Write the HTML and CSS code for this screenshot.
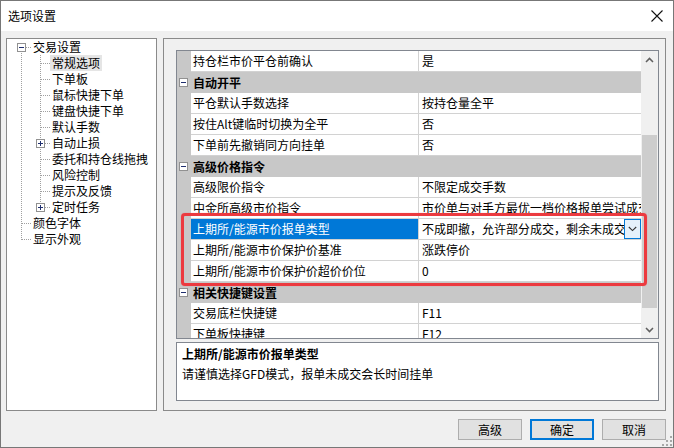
FILE: index.html
```html
<!DOCTYPE html>
<html lang="zh-CN">
<head>
<meta charset="utf-8">
<title>选项设置</title>
<link rel="stylesheet" href="styles.css">
</head>
<body>
<div class="window">
  <div class="titlebar">
    <span class="title">选项设置</span>
    <svg class="close" width="12" height="12" viewBox="0 0 12 12"><path d="M0.5 0.5L11.5 11.5M11.5 0.5L0.5 11.5" stroke="#111" stroke-width="1.1" fill="none"/></svg>
  </div>

  <div class="content">
    <div class="tree">
      <div class="trow">
        <div class="ca ca-first"><svg class="box" width="9" height="9" viewBox="0 0 9 9"><rect x="0.5" y="0.5" width="8" height="8" fill="#fff" stroke="#919191"/><path d="M2 4.5H7" stroke="#1f2f6f"/></svg></div>
        <span class="tlabel">交易设置</span>
      </div>
      <div class="trow"><div class="ca ca-pass"></div><div class="cb cb-mid"></div><span class="tlabel sel">常规选项</span></div>
      <div class="trow"><div class="ca ca-pass"></div><div class="cb cb-mid"></div><span class="tlabel">下单板</span></div>
      <div class="trow"><div class="ca ca-pass"></div><div class="cb cb-mid"></div><span class="tlabel">鼠标快捷下单</span></div>
      <div class="trow"><div class="ca ca-pass"></div><div class="cb cb-mid"></div><span class="tlabel">键盘快捷下单</span></div>
      <div class="trow"><div class="ca ca-pass"></div><div class="cb cb-mid"></div><span class="tlabel">默认手数</span></div>
      <div class="trow"><div class="ca ca-pass"></div><div class="cb cb-mid"><svg class="box" width="9" height="9" viewBox="0 0 9 9"><rect x="0.5" y="0.5" width="8" height="8" fill="#fff" stroke="#919191"/><path d="M2 4.5H7M4.5 2V7" stroke="#1f2f6f"/></svg></div><span class="tlabel">自动止损</span></div>
      <div class="trow"><div class="ca ca-pass"></div><div class="cb cb-mid"></div><span class="tlabel">委托和持仓线拖拽</span></div>
      <div class="trow"><div class="ca ca-pass"></div><div class="cb cb-mid"></div><span class="tlabel">风险控制</span></div>
      <div class="trow"><div class="ca ca-pass"></div><div class="cb cb-mid"></div><span class="tlabel">提示及反馈</span></div>
      <div class="trow"><div class="ca ca-pass"></div><div class="cb cb-last"><svg class="box" width="9" height="9" viewBox="0 0 9 9"><rect x="0.5" y="0.5" width="8" height="8" fill="#fff" stroke="#919191"/><path d="M2 4.5H7M4.5 2V7" stroke="#1f2f6f"/></svg></div><span class="tlabel">定时任务</span></div>
      <div class="trow"><div class="ca ca-mid"></div><span class="tlabel">颜色字体</span></div>
      <div class="trow"><div class="ca ca-last"></div><span class="tlabel">显示外观</span></div>
    </div>

    <div class="panel">
      <div class="grid">
        <div class="rows">
          <div class="row"><div class="gut"></div><div class="name">持仓栏市价平仓前确认</div><div class="val">是</div></div>
          <div class="row cat"><div class="gut"><svg class="box" width="9" height="9" viewBox="0 0 9 9"><rect x="0.5" y="0.5" width="8" height="8" fill="#fff" stroke="#919191"/><path d="M2 4.5H7" stroke="#1f2f6f"/></svg></div><div class="catname">自动开平</div></div>
          <div class="row"><div class="gut"></div><div class="name">平仓默认手数选择</div><div class="val">按持仓量全平</div></div>
          <div class="row"><div class="gut"></div><div class="name">按住Alt键临时切换为全平</div><div class="val">否</div></div>
          <div class="row"><div class="gut"></div><div class="name">下单前先撤销同方向挂单</div><div class="val">否</div></div>
          <div class="row cat"><div class="gut"><svg class="box" width="9" height="9" viewBox="0 0 9 9"><rect x="0.5" y="0.5" width="8" height="8" fill="#fff" stroke="#919191"/><path d="M2 4.5H7" stroke="#1f2f6f"/></svg></div><div class="catname">高级价格指令</div></div>
          <div class="row"><div class="gut"></div><div class="name">高级限价指令</div><div class="val">不限定成交手数</div></div>
          <div class="row"><div class="gut"></div><div class="name">中金所高级市价指令</div><div class="val">市价单与对手方最优一档价格报单尝试成交</div></div>
          <div class="row"><div class="gut"></div><div class="name selected">上期所/能源市价报单类型</div><div class="val editing"><span class="vtext">不成即撤，允许部分成交，剩余未成交</span><span class="dropbtn"><svg width="9" height="6" viewBox="0 0 9 6"><path d="M0.8 1L4.5 4.6L8.2 1" stroke="#333" stroke-width="1.1" fill="none"/></svg></span></div></div>
          <div class="row"><div class="gut"></div><div class="name">上期所/能源市价保护价基准</div><div class="val">涨跌停价</div></div>
          <div class="row"><div class="gut"></div><div class="name">上期所/能源市价保护价超价价位</div><div class="val">0</div></div>
          <div class="row cat"><div class="gut"><svg class="box" width="9" height="9" viewBox="0 0 9 9"><rect x="0.5" y="0.5" width="8" height="8" fill="#fff" stroke="#919191"/><path d="M2 4.5H7" stroke="#1f2f6f"/></svg></div><div class="catname">相关快捷键设置</div></div>
          <div class="row"><div class="gut"></div><div class="name">交易底栏快捷键</div><div class="val">F11</div></div>
          <div class="row"><div class="gut"></div><div class="name">下单板快捷键</div><div class="val">F12</div></div>
        </div>
        <div class="scrollbar">
          <div class="sarrow"><svg width="9" height="6" viewBox="0 0 9 6"><path d="M1 5L4.5 1.4L8 5" stroke="#606060" stroke-width="1.5" fill="none"/></svg></div>
          <div class="strack-top"></div>
          <div class="sthumb"></div>
          <div class="strack-rest"></div>
          <div class="sarrow"><svg width="9" height="6" viewBox="0 0 9 6"><path d="M1 1L4.5 4.6L8 1" stroke="#606060" stroke-width="1.5" fill="none"/></svg></div>
        </div>
      </div>
      <div class="desc">
        <div class="desc-title">上期所/能源市价报单类型</div>
        <div class="desc-text">请谨慎选择GFD模式，报单未成交会长时间挂单</div>
      </div>
    </div>
  </div>

  <div class="buttons">
    <div class="btn">高级</div>
    <div class="btn primary">确定</div>
    <div class="btn">取消</div>
  </div>

  <div class="highlight"></div>
  <svg class="grip" width="10" height="10" viewBox="0 0 10 10">
    <g fill="#a8a8a8">
      <rect x="8" y="0" width="2" height="2"/>
      <rect x="4" y="4" width="2" height="2"/><rect x="8" y="4" width="2" height="2"/>
      <rect x="0" y="8" width="2" height="2"/><rect x="4" y="8" width="2" height="2"/><rect x="8" y="8" width="2" height="2"/>
    </g>
  </svg>
</div>
</body>
</html>
```
FILE: styles.css
```css
* { box-sizing: border-box; }
html, body { margin: 0; padding: 0; }
body {
  font-family: "Noto Sans CJK SC", "Noto Sans", sans-serif;
  font-size: 12px;
  color: #000;
  background: #fff;
}
.window {
  position: relative;
  width: 674px;
  height: 448px;
  border: 1px solid #777;
  background: #f0f0f0;
  display: flex;
  flex-direction: column;
  overflow: hidden;
}
.titlebar {
  height: 30px;
  flex: none;
  background: #fff;
  display: flex;
  align-items: center;
  justify-content: space-between;
  padding: 0 10px 0 7px;
}
.title { font-size: 12px; line-height: 16px; }
.content {
  display: flex;
  gap: 6px;
  padding: 7px 0 0 5px;
  flex: none;
}
.tree {
  width: 151px;
  height: 373px;
  background: #fff;
  border: 1px solid #8a8a8a;
  padding-top: 0;
}
.trow {
  height: 16px;
  display: flex;
  align-items: center;
  white-space: nowrap;
}
.ca, .cb {
  height: 16px;
  flex: none;
  display: flex;
  align-items: center;
  background-repeat: no-repeat;
}
.ca { width: 24px; }
.cb { width: 19px; }
.ca .box { margin-left: 10px; }
.cb .box { margin-left: 5px; }
.box { display: block; flex: none; }

.ca-first {
  background-image:
    repeating-linear-gradient(to bottom, #a0a0a0 0 1px, transparent 1px 2px),
    repeating-linear-gradient(to right, #a0a0a0 0 1px, transparent 1px 2px);
  background-size: 1px 8px, 6px 1px;
  background-position: 14px 8px, 19px 8px;
}
.ca-pass {
  background-image: repeating-linear-gradient(to bottom, #a0a0a0 0 1px, transparent 1px 2px);
  background-size: 1px 16px;
  background-position: 14px 0;
}
.ca-mid {
  background-image:
    repeating-linear-gradient(to bottom, #a0a0a0 0 1px, transparent 1px 2px),
    repeating-linear-gradient(to right, #a0a0a0 0 1px, transparent 1px 2px);
  background-size: 1px 16px, 9px 1px;
  background-position: 14px 0, 15px 8px;
}
.ca-last {
  background-image:
    repeating-linear-gradient(to bottom, #a0a0a0 0 1px, transparent 1px 2px),
    repeating-linear-gradient(to right, #a0a0a0 0 1px, transparent 1px 2px);
  background-size: 1px 9px, 9px 1px;
  background-position: 14px 0, 15px 8px;
}
.cb-mid {
  background-image:
    repeating-linear-gradient(to bottom, #a0a0a0 0 1px, transparent 1px 2px),
    repeating-linear-gradient(to right, #a0a0a0 0 1px, transparent 1px 2px);
  background-size: 1px 16px, 9px 1px;
  background-position: 9px 0, 10px 8px;
}
.cb-last {
  background-image:
    repeating-linear-gradient(to bottom, #a0a0a0 0 1px, transparent 1px 2px),
    repeating-linear-gradient(to right, #a0a0a0 0 1px, transparent 1px 2px);
  background-size: 1px 9px, 9px 1px;
  background-position: 9px 0, 10px 8px;
}
.tlabel {
  padding: 0 2px;
  line-height: 16px;
}
.tlabel.sel { background: #e5e5e5; }

.panel {
  width: 503px;
  height: 373px;
  border: 1px solid #8a8a8a;
  padding: 11px 6px 9px 12px;
  display: flex;
  flex-direction: column;
  gap: 3px;
}
.grid {
  height: 289px;
  flex: none;
  border: 1px solid #828790;
  background: #fff;
  display: flex;
  overflow: hidden;
}
.rows {
  width: 464px;
  flex: none;
  display: flex;
  flex-direction: column;
  overflow: hidden;
  background: #c8c8c8;
}
.row {
  height: 21px;
  flex: none;
  display: flex;
}
.gut {
  width: 14px;
  flex: none;
  background: #c8c8c8;
  display: flex;
  align-items: center;
}
.gut .box { margin-left: 2px; }
.name, .val {
  background: #fff;
  border-bottom: 1px solid #d2d2d2;
  line-height: 20px;
  white-space: nowrap;
  overflow: hidden;
}
.name {
  width: 228px;
  flex: none;
  padding-left: 2px;
  border-right: 1px solid #d2d2d2;
}
.name.selected {
  background: #0078d7;
  color: #fff;
}
.val {
  width: 222px;
  flex: none;
  padding-left: 3px;
}
.val.editing {
  display: flex;
  align-items: stretch;
  padding-right: 0;
}
.vtext {
  flex: 1;
  overflow: hidden;
  white-space: nowrap;
}
.dropbtn {
  width: 17px;
  height: 20px;
  flex: none;
  background: #e5f1fb;
  border: 1px solid #0078d7;
  display: flex;
  align-items: center;
  justify-content: center;
}
.cat { background: #c8c8c8; }
.catname {
  flex: 1;
  padding-left: 2px;
  font-weight: bold;
  line-height: 21px;
}
.scrollbar {
  width: 17px;
  flex: none;
  background: #f0f0f0;
  display: flex;
  flex-direction: column;
}
.sarrow {
  height: 17px;
  flex: none;
  display: flex;
  align-items: center;
  justify-content: center;
}
.strack-top { height: 67px; flex: none; }
.sthumb {
  height: 173px;
  flex: none;
  margin: 0 1px;
  background: #cdcdcd;
}
.strack-rest { flex: 1; }

.desc {
  height: 59px;
  flex: none;
  border: 1px solid #828790;
  background: #fff;
  padding: 3px 5px 0;
}
.desc-title {
  font-weight: bold;
  line-height: 16px;
}
.desc-text {
  margin-top: 4px;
  line-height: 16px;
}

.buttons {
  display: flex;
  justify-content: flex-end;
  gap: 8px;
  padding: 8px 7px 0 0;
}
.btn {
  width: 64px;
  height: 21px;
  background: #e1e1e1;
  border: 1px solid #adadad;
  display: flex;
  align-items: center;
  justify-content: center;
  line-height: 16px;
}
.btn.primary {
  border: 2px solid #0078d7;
}

.highlight {
  position: absolute;
  left: 180px;
  top: 212px;
  width: 466px;
  height: 73px;
  border: 3px solid #ec3a3f;
  border-radius: 4px;
  box-shadow: 0 0 1px rgba(236, 58, 63, 0.6);
  pointer-events: none;
}
.grip {
  position: absolute;
  right: 1px;
  bottom: 1px;
}
```
